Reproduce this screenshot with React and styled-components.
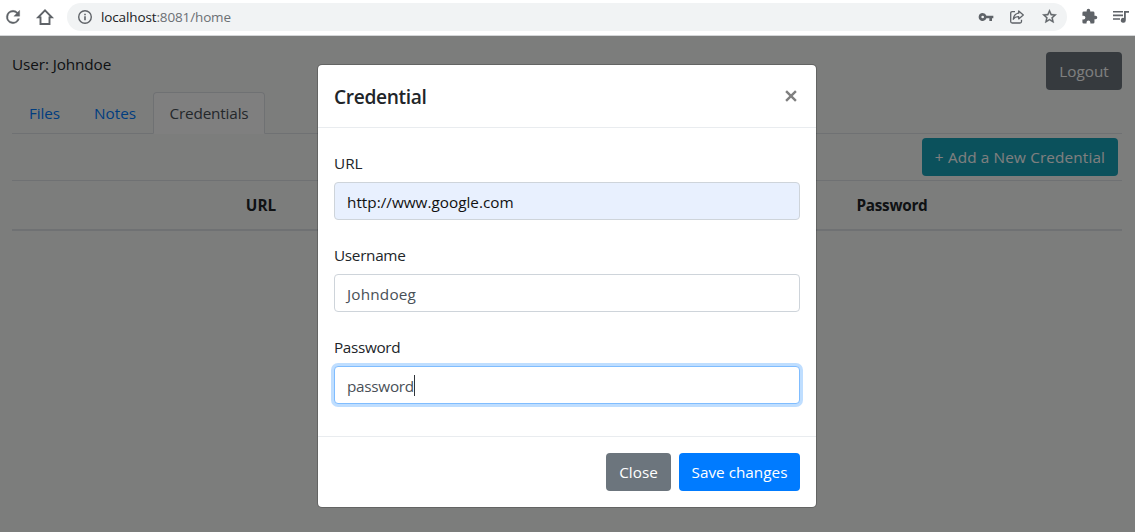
import React from 'react';
import styled, { createGlobalStyle, css } from 'styled-components';

const Global = createGlobalStyle`
  *, *::before, *::after { box-sizing: border-box; }
  html, body { margin: 0; height: 100%; overflow: hidden; }
  body {
    font-family: "Segoe UI", "Open Sans", "Noto Sans", sans-serif;
    font-size: 15.3px;
    line-height: 24px;
    color: #212529;
  }
  button, input { font: inherit; letter-spacing: inherit; }
`;

const Window = styled.div`
  display: flex;
  flex-direction: column;
  height: 532px;
  width: 1135px;
`;

const BrowserBar = styled.header`
  display: flex;
  align-items: center;
  height: 36px;
  padding: 0 4px 2px 3px;
  border-bottom: 1px solid #d4d6d8;
  background: #fff;
  color: #5f6368;
`;

const Icon = styled.svg`
  display: block;
  flex: none;
  width: ${(p) => p.$size || 20}px;
  height: ${(p) => p.$size || 20}px;
  margin-left: ${(p) => p.$gap || 0}px;
  fill: currentColor;
`;

const AddressBar = styled.div`
  display: flex;
  align-items: center;
  width: 1000px;
  height: 28px;
  margin-left: 12px;
  padding: 0 9px 0 10px;
  border-radius: 14px;
  background: #f1f3f4;
`;

const Address = styled.span`
  flex: 1;
  margin-left: 8px;
  font-size: 13.5px;
  line-height: 20px;
  letter-spacing: -0.13px;
  color: #6c7074;
  b { font-weight: 400; color: #202124; }
`;

const Page = styled.main`
  flex: 1;
  position: relative;
  padding: 16px 13px 0 12px;
  background: #f8fbf9;
`;

const TopRow = styled.div`
  display: flex;
  justify-content: space-between;
  height: 40px;
`;

const Text = styled.span`
  letter-spacing: ${(p) => p.$track || 0}px;
`;

const Button = styled.button`
  display: flex;
  align-items: center;
  justify-content: center;
  width: ${(p) => p.$width}px;
  height: 38px;
  padding: 0;
  border: 0;
  border-radius: 4px;
  background: ${(p) => p.$color};
  color: #fff;
  white-space: nowrap;
`;

const Tabs = styled.nav`
  display: flex;
  height: 42px;
  border-bottom: 1px solid #dee2e6;
`;

const Tab = styled.a`
  width: ${(p) => p.$width}px;
  height: 42px;
  padding-top: 8px;
  border: 1px solid transparent;
  border-radius: 4px 4px 0 0;
  text-align: center;
  color: #007bff;
  ${(p) => p.$active && css`
    border-color: #dee2e6 #dee2e6 #fff;
    background: #fff;
    color: #495057;
  `}
`;

const Actions = styled.div`
  display: flex;
  justify-content: flex-end;
  height: 46px;
  padding: 4px 4px 0 0;
`;

const TableHead = styled.div`
  display: grid;
  grid-template-columns: 141px 216px 293px 460px;
  align-items: center;
  height: 51px;
  border-top: 1px solid #dee2e6;
  border-bottom: 2px solid #dee2e6;
  text-align: center;
  font-weight: 700;
`;

const Backdrop = styled.div`
  position: absolute;
  inset: 0;
  padding: 28px 0 0 317px;
  background: rgba(0, 0, 0, 0.5);
`;

const Dialog = styled.section`
  width: 500px;
  border: 1px solid rgba(0, 0, 0, 0.2);
  border-radius: 5px;
  background: #fff;
  background-clip: padding-box;
`;

const DialogHeader = styled.div`
  display: flex;
  justify-content: space-between;
  align-items: center;
  height: 63px;
  padding: 0 16px;
  border-bottom: 1px solid #e9ecef;
`;

const Title = styled.h5`
  margin: 0;
  padding-top: 2px;
  font-size: 19.2px;
  line-height: 30px;
  font-weight: 600;
  letter-spacing: -0.35px;
`;

const CloseMark = styled.svg`
  width: 12px;
  height: 12px;
  margin-right: 3px;
  stroke: #7f7f7f;
  stroke-width: 2.2;
`;

const Form = styled.div`
  display: flex;
  flex-direction: column;
  gap: 23px;
  padding: 23px 16px 32px;
`;

const Field = styled.label`
  display: flex;
  flex-direction: column;
  gap: 7px;
`;

const InputBox = styled.div`
  display: flex;
  align-items: center;
  height: 38px;
  padding: 2px 12px 0;
  border: 1px solid #ced4da;
  border-radius: 4px;
  background: #fff;
  color: #495057;
  ${(p) => p.$filled && css`background: #e8f0fe; color: #111;`}
  ${(p) => p.$focused && css`
    border-color: #80bdff;
    box-shadow: 0 0 0 3px rgba(0, 123, 255, 0.25);
  `}
`;

const Caret = styled.i`
  width: 1px;
  height: 21px;
  margin-top: -2px;
  background: #2f3439;
`;

const DialogFooter = styled.div`
  display: flex;
  justify-content: flex-end;
  gap: 8px;
  padding: 16px;
  border-top: 1px solid #e9ecef;
`;

export default function App() {
  return (
    <>
      <Global />
      <Window>
        <BrowserBar>
          <Icon viewBox="0 0 24 24"><path stroke="currentColor" strokeWidth="0.4" d="M17.65 6.35A7.96 7.96 0 0 0 12 4a8 8 0 1 0 7.73 10h-2.08A6 6 0 1 1 12 6c1.66 0 3.14.69 4.22 1.78L13 11h7V4z" /></Icon>
          <Icon $gap={12} viewBox="0 0 20 20"><path fill="none" stroke="currentColor" strokeWidth="1.9" d="M3.200 10.400H5.500V17H14.500V10.400H16.800L10 3.400Z" /></Icon>
          <AddressBar>
            <Icon $size={16} viewBox="0 0 16 16"><circle cx="8" cy="8" r="6.300" fill="none" stroke="currentColor" strokeWidth="1.400" /><path d="M7.200 7.200h1.600v4.100H7.200zM7.200 4.700h1.600v1.500H7.200z" /></Icon>
            <Address><b>localhost</b>:8081/home</Address>
            <Icon $size={16} viewBox="0 0 24 24"><path d="M12.650 10A5.990 5.990 0 0 0 7 6a6 6 0 1 0 5.650 8H17v4h4v-4h2v-4H12.650zM7 14a2 2 0 1 1 0-4 2 2 0 0 1 0 4z" /></Icon>
            <Icon $size={16} $gap={15} viewBox="0 0 16 16"><g fill="none" stroke="currentColor" strokeWidth="1.300" strokeLinejoin="round"><path d="M6 2.700H3.200Q1.700 2.700 1.700 4.200V12.500Q1.700 14 3.200 14H11Q12.500 14 12.500 12.500V10.800" /><path d="M9.700 1.900 14.300 5.900 9.700 9.900V7.700Q6.300 7.500 4.300 10.200 4.800 4.700 9.700 4.200Z" /></g></Icon>
            <Icon $size={17} $gap={16} viewBox="0 0 24 24"><path stroke="currentColor" strokeWidth="0.5" d="m22 9.240-7.190-.62L12 2 9.190 8.630 2 9.240l5.460 4.730L5.820 21 12 17.270 18.180 21l-1.630-7.030L22 9.240zM12 15.400l-3.760 2.270 1-4.280-3.320-2.880 4.380-.38L12 6.100l1.710 4.040 4.380.38-3.320 2.880 1 4.280L12 15.400z" /></Icon>
          </AddressBar>
          <Icon $size={17} $gap={14} viewBox="0 0 24 24"><path d="M20.500 11H19V7a2 2 0 0 0-2-2h-4V3.500a2.500 2.500 0 0 0-5 0V5H4a2 2 0 0 0-2 2v3.800h1.500a2.700 2.700 0 0 1 0 5.400H2V20a2 2 0 0 0 2 2h3.800v-1.500a2.700 2.700 0 0 1 5.400 0V22H17a2 2 0 0 0 2-2v-4h1.500a2.500 2.500 0 0 0 0-5z" /></Icon>
          <Icon $size={18} $gap={14} viewBox="0 0 18 18"><path d="M1 3h10v1.600H1zM1 6.600h10v1.600H1zM1 10.200h7v1.600H1zM12 3h5v1.700h-3.200V12.300a2.500 2.500 0 1 1-1.800-2.400z" /></Icon>
        </BrowserBar>
        <Page>
          <TopRow>
            <Text $track={-0.1}>User: Johndoe</Text>
            <Button $width={76} $color="#6c757d"><Text>Logout</Text></Button>
          </TopRow>
          <Tabs>
            <Tab $width={65}><Text $track={-0.1}>Files</Text></Tab>
            <Tab $width={76}><Text>Notes</Text></Tab>
            <Tab $width={112} $active><Text $track={-0.17}>Credentials</Text></Tab>
          </Tabs>
          <Actions>
            <Button $width={196} $color="#17a2b8"><Text $track={0.15}>+ Add a New Credential</Text></Button>
          </Actions>
          <TableHead>
            <span /><Text>URL</Text><span /><Text $track={-0.28}>Password</Text>
          </TableHead>
          <Backdrop>
            <Dialog>
              <DialogHeader>
                <Title>Credential</Title>
                <CloseMark viewBox="0 0 11 11"><path d="M1 1 10 10M10 1 1 10" /></CloseMark>
              </DialogHeader>
              <Form>
                <Field><Text>URL</Text><InputBox $filled><Text>http://www.google.com</Text></InputBox></Field>
                <Field><Text $track={-0.3}>Username</Text><InputBox><Text $track={0.2}>Johndoeg</Text></InputBox></Field>
                <Field><Text $track={-0.35}>Password</Text><InputBox $focused><Text $track={-0.27}>password</Text><Caret /></InputBox></Field>
              </Form>
              <DialogFooter>
                <Button $width={65} $color="#6c757d"><Text>Close</Text></Button>
                <Button $width={121} $color="#007bff"><Text>Save changes</Text></Button>
              </DialogFooter>
            </Dialog>
          </Backdrop>
        </Page>
      </Window>
    </>
  );
}
